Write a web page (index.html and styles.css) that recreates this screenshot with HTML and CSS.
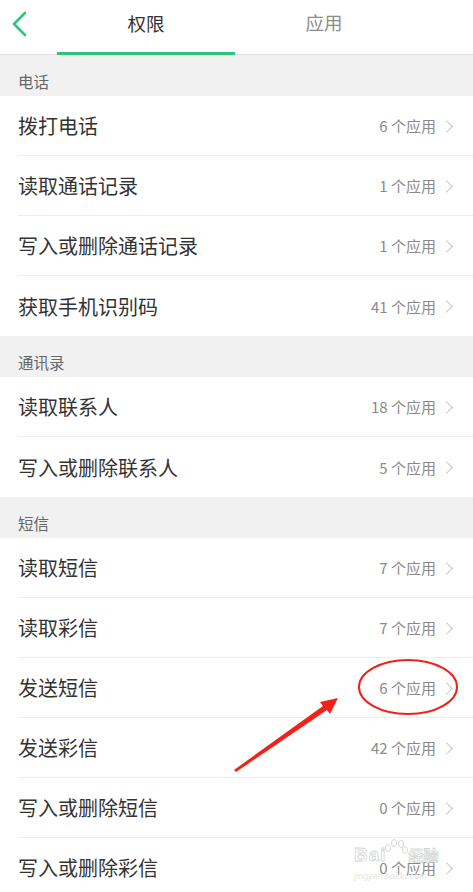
FILE: index.html
```html
<!DOCTYPE html>
<html lang="zh">
<head>
<meta charset="utf-8">
<link rel="stylesheet" href="styles.css">
</head>
<body>
<div class="page">
  <header class="topbar">
    <div class="back">
      <svg width="20" height="28" viewBox="0 0 20 28"><polyline points="13,3 2,14 13,25" fill="none" stroke="#2ec47c" stroke-width="2.6" stroke-linecap="round" stroke-linejoin="round"/></svg>
    </div>
    <div class="tab active">权限</div>
    <div class="tab">应用</div>
  </header>

  <div class="section">电话</div>
  <div class="row"><span class="name">拨打电话</span><span class="count">6 个应用</span><span class="chev"></span></div>
  <div class="row"><span class="name">读取通话记录</span><span class="count">1 个应用</span><span class="chev"></span></div>
  <div class="row"><span class="name">写入或删除通话记录</span><span class="count">1 个应用</span><span class="chev"></span></div>
  <div class="row last"><span class="name">获取手机识别码</span><span class="count">41 个应用</span><span class="chev"></span></div>

  <div class="section">通讯录</div>
  <div class="row"><span class="name">读取联系人</span><span class="count">18 个应用</span><span class="chev"></span></div>
  <div class="row last"><span class="name">写入或删除联系人</span><span class="count">5 个应用</span><span class="chev"></span></div>

  <div class="section">短信</div>
  <div class="row"><span class="name">读取短信</span><span class="count">7 个应用</span><span class="chev"></span></div>
  <div class="row"><span class="name">读取彩信</span><span class="count">7 个应用</span><span class="chev"></span></div>
  <div class="row"><span class="name">发送短信</span><span class="count">6 个应用</span><span class="chev"></span></div>
  <div class="row"><span class="name">发送彩信</span><span class="count">42 个应用</span><span class="chev"></span></div>
  <div class="row"><span class="name">写入或删除短信</span><span class="count">0 个应用</span><span class="chev"></span></div>
  <div class="row"><span class="name">写入或删除彩信</span><span class="count">0 个应用</span><span class="chev"></span></div>

  <svg class="annot" width="473" height="892" viewBox="0 0 473 892">
    <ellipse cx="408" cy="687" rx="49" ry="27" fill="none" stroke="#f0201c" stroke-width="2"/>
    <polygon points="234,770 323,706 320,702 338,698 330,714 327,710 236,772" fill="#f5201a"/>
    <g fill="#fff" stroke="#d8d8d8" stroke-width="1">
      <ellipse cx="388" cy="848" rx="2.5" ry="3.5"/>
      <ellipse cx="394" cy="843" rx="2.5" ry="3.5"/>
      <ellipse cx="401" cy="844" rx="2.5" ry="3.5"/>
      <ellipse cx="405" cy="850" rx="2.5" ry="3.5"/>
    </g>
  </svg>
  <div class="watermark"><span class="wm-bai">Bai</span><span class="wm-cn">经验</span><div class="wm-url">jingyan.baidu.com</div></div>
</div>
</body>
</html>
```
FILE: styles.css
```css
* { box-sizing: border-box; }
html, body { margin: 0; padding: 0; }
body {
  font-family: "Noto Sans CJK SC", "Noto Sans", sans-serif;
  background: #ffffff;
  width: 473px;
  height: 892px;
  overflow: hidden;
}
.page { position: relative; width: 473px; height: 892px; overflow: hidden; }
.topbar {
  height: 55px;
  display: flex;
  align-items: stretch;
  border-bottom: 1px solid #e2e2e2;
  background: #fff;
  position: relative;
}
.back {
  position: absolute;
  left: 12px;
  top: 10px;
}
.tab {
  font-size: 18.5px;
  color: #8c8c8c;
  display: flex;
  align-items: center;
  justify-content: center;
  padding-bottom: 10px;
  width: 178px;
}
.tab.active {
  margin-left: 57px;
  color: #333;
  border-bottom: 3px solid #2ec47c;
  padding-bottom: 7px;
  margin-bottom: -1px;
}
.section {
  height: 41px;
  background: #f1f1f1;
  color: #666;
  font-size: 15.5px;
  padding-left: 18px;
  display: flex;
  align-items: flex-end;
  padding-bottom: 4px;
}
.row {
  height: 60px;
  margin-left: 18px;
  display: flex;
  align-items: center;
  border-bottom: 1px solid #ececec;
  padding-right: 22px;
}
.row.last { border-bottom: none; }
.name {
  flex: 1;
  font-size: 20px;
  color: #333;
}
.count {
  font-size: 15px;
  color: #8a8a8a;
}
.chev {
  width: 9px;
  height: 9px;
  border-top: 1.5px solid #c4c4c4;
  border-right: 1.5px solid #c4c4c4;
  transform: rotate(45deg);
  margin-left: 6px;
  margin-top: 1px;
}
.annot {
  position: absolute;
  left: 0;
  top: 0;
  pointer-events: none;
}
.watermark {
  position: absolute;
  left: 354px;
  top: 846px;
  white-space: nowrap;
  font-family: "Liberation Sans", "Noto Sans CJK SC", sans-serif;
  line-height: 18px;
  color: #fff;
  -webkit-text-stroke: 0.8px #d6d6d6;
  pointer-events: none;
}
.wm-bai { font-size: 19px; font-weight: bold; letter-spacing: 1px; }
.wm-cn { font-size: 15px; margin-left: 22px; font-weight: bold; }
.wm-url {
  font-size: 9px;
  line-height: 10px;
  margin-top: 6px;
  color: #e4e4e4;
  -webkit-text-stroke: 0;
}
```
